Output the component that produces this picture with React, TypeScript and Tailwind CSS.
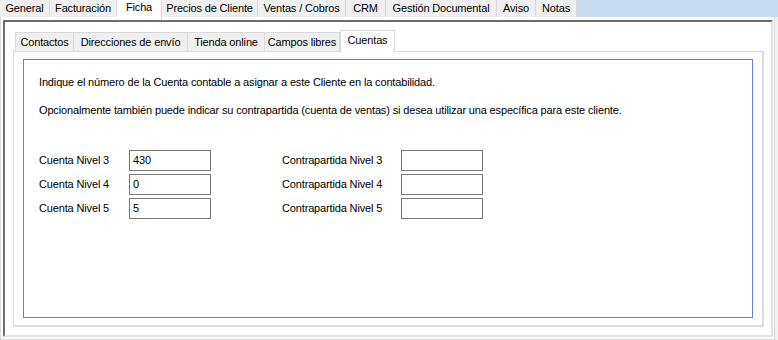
import React from 'react';

const topTabs = [
    { label: 'General', w: 50 },
    { label: 'Facturación', w: 67 },
    { label: 'Ficha', w: 45, active: true },
    { label: 'Precios de Cliente', w: 96 },
    { label: 'Ventas / Cobros', w: 88 },
    { label: 'CRM', w: 40 },
    { label: 'Gestión Documental', w: 111 },
    { label: 'Aviso', w: 39 },
    { label: 'Notas', w: 41 },
];

const subTabs = [
    { label: 'Contactos', w: 59 },
    { label: 'Direcciones de envío', w: 114 },
    { label: 'Tienda online', w: 77 },
    { label: 'Campos libres', w: 75 },
    { label: 'Cuentas', w: 55, active: true },
];

const rows = [
    { level: 3, value: '430' },
    { level: 4, value: '0' },
    { level: 5, value: '5' },
];

function Field({ value }: { value: string }) {
    return (
        <div className="h-[21px] border border-[#7a7a7a] bg-white pl-[3px] flex items-center leading-none">
            {value}
        </div>
    );
}

export default function App() {
    return (
        <div
            className="w-[778px] h-[340px] bg-white text-[11px] tracking-[-0.15px] text-black overflow-hidden flex flex-col"
            style={{ fontFamily: '"Liberation Sans", Arial, sans-serif' }}
        >
            {/* Main tab strip */}
            <div className="h-[17px] bg-[#cadcf0] flex items-start shrink-0 relative z-10">
                {topTabs.map((t) =>
                    t.active ? (
                        <div
                            key={t.label}
                            style={{ width: t.w }}
                            className="h-[20px] bg-white border-r border-[#d9d9d9] flex justify-center pt-[1px] leading-[13px]"
                        >
                            {t.label}
                        </div>
                    ) : (
                        <div
                            key={t.label}
                            style={{ width: t.w }}
                            className="h-[17px] bg-[#f0f0f0] border-r border-[#d9d9d9] flex justify-center pt-[2px] leading-[13px]"
                        >
                            {t.label}
                        </div>
                    )
                )}
            </div>

            <div className="flex-1 flex">
                {/* Page body */}
                <div className="w-[775px] border-l border-r border-b border-[#dadada] pl-[2px] pt-[3px] pr-[1px] pb-[2px] flex">
                    {/* Sunken panel */}
                    <div className="flex-1 border-t-2 border-l-2 border-t-[#6d6d6d] border-l-[#6d6d6d] border-r-2 border-b-2 border-r-[#e3e3e3] border-b-[#e3e3e3] pt-[8px] pl-[8px] pr-[7px] pb-[8px] flex flex-col">
                        {/* Sub tab strip */}
                        <div className="h-[21px] flex items-end pl-[2px] relative z-10">
                            {subTabs.map((t, i) =>
                                t.active ? (
                                    <div
                                        key={t.label}
                                        style={{ width: t.w }}
                                        className="h-[22px] -mb-[1px] bg-white border border-b-0 border-[#d9d9d9] flex justify-center pt-[3px] leading-[13px]"
                                    >
                                        {t.label}
                                    </div>
                                ) : (
                                    <div
                                        key={t.label}
                                        style={{ width: t.w }}
                                        className={`h-[19px] bg-[#f0f0f0] border-t border-r border-[#d9d9d9] flex justify-center pt-[3px] leading-[13px] ${i === 0 ? 'border-l' : ''}`}
                                    >
                                        {t.label}
                                    </div>
                                )
                            )}
                        </div>

                        {/* Sub tab page */}
                        <div className="flex-1 border border-[#d9d9d9] border-r-2 border-b-2 border-r-[#dcdcdc] border-b-[#dcdcdc] bg-white pt-[7px] pl-[9px] pr-[9px] pb-[7px] flex">
                            <div className="flex-1 border border-[#6b7fdf] pl-[15px] pt-[16px]">
                                <p className="leading-[13px]">
                                    Indique el número de la Cuenta contable a asignar a este Cliente en la contabilidad.
                                </p>
                                <p className="leading-[13px] mt-[15px]">
                                    Opcionalmente también puede indicar su contrapartida (cuenta de ventas) si desea utilizar una específica para este cliente.
                                </p>

                                <div className="mt-[33px] grid grid-cols-[90px_82px_71px_119px_82px] gap-y-[3px] items-center">
                                    {rows.map((r) => (
                                        <React.Fragment key={r.level}>
                                            <span className="leading-[13px]">Cuenta Nivel {r.level}</span>
                                            <Field value={r.value} />
                                            <span />
                                            <span className="leading-[13px]">Contrapartida Nivel {r.level}</span>
                                            <Field value="" />
                                        </React.Fragment>
                                    ))}
                                </div>
                            </div>
                        </div>
                    </div>
                </div>
                <div className="flex-1 bg-[#f0f0f0]" />
            </div>
        </div>
    );
}
